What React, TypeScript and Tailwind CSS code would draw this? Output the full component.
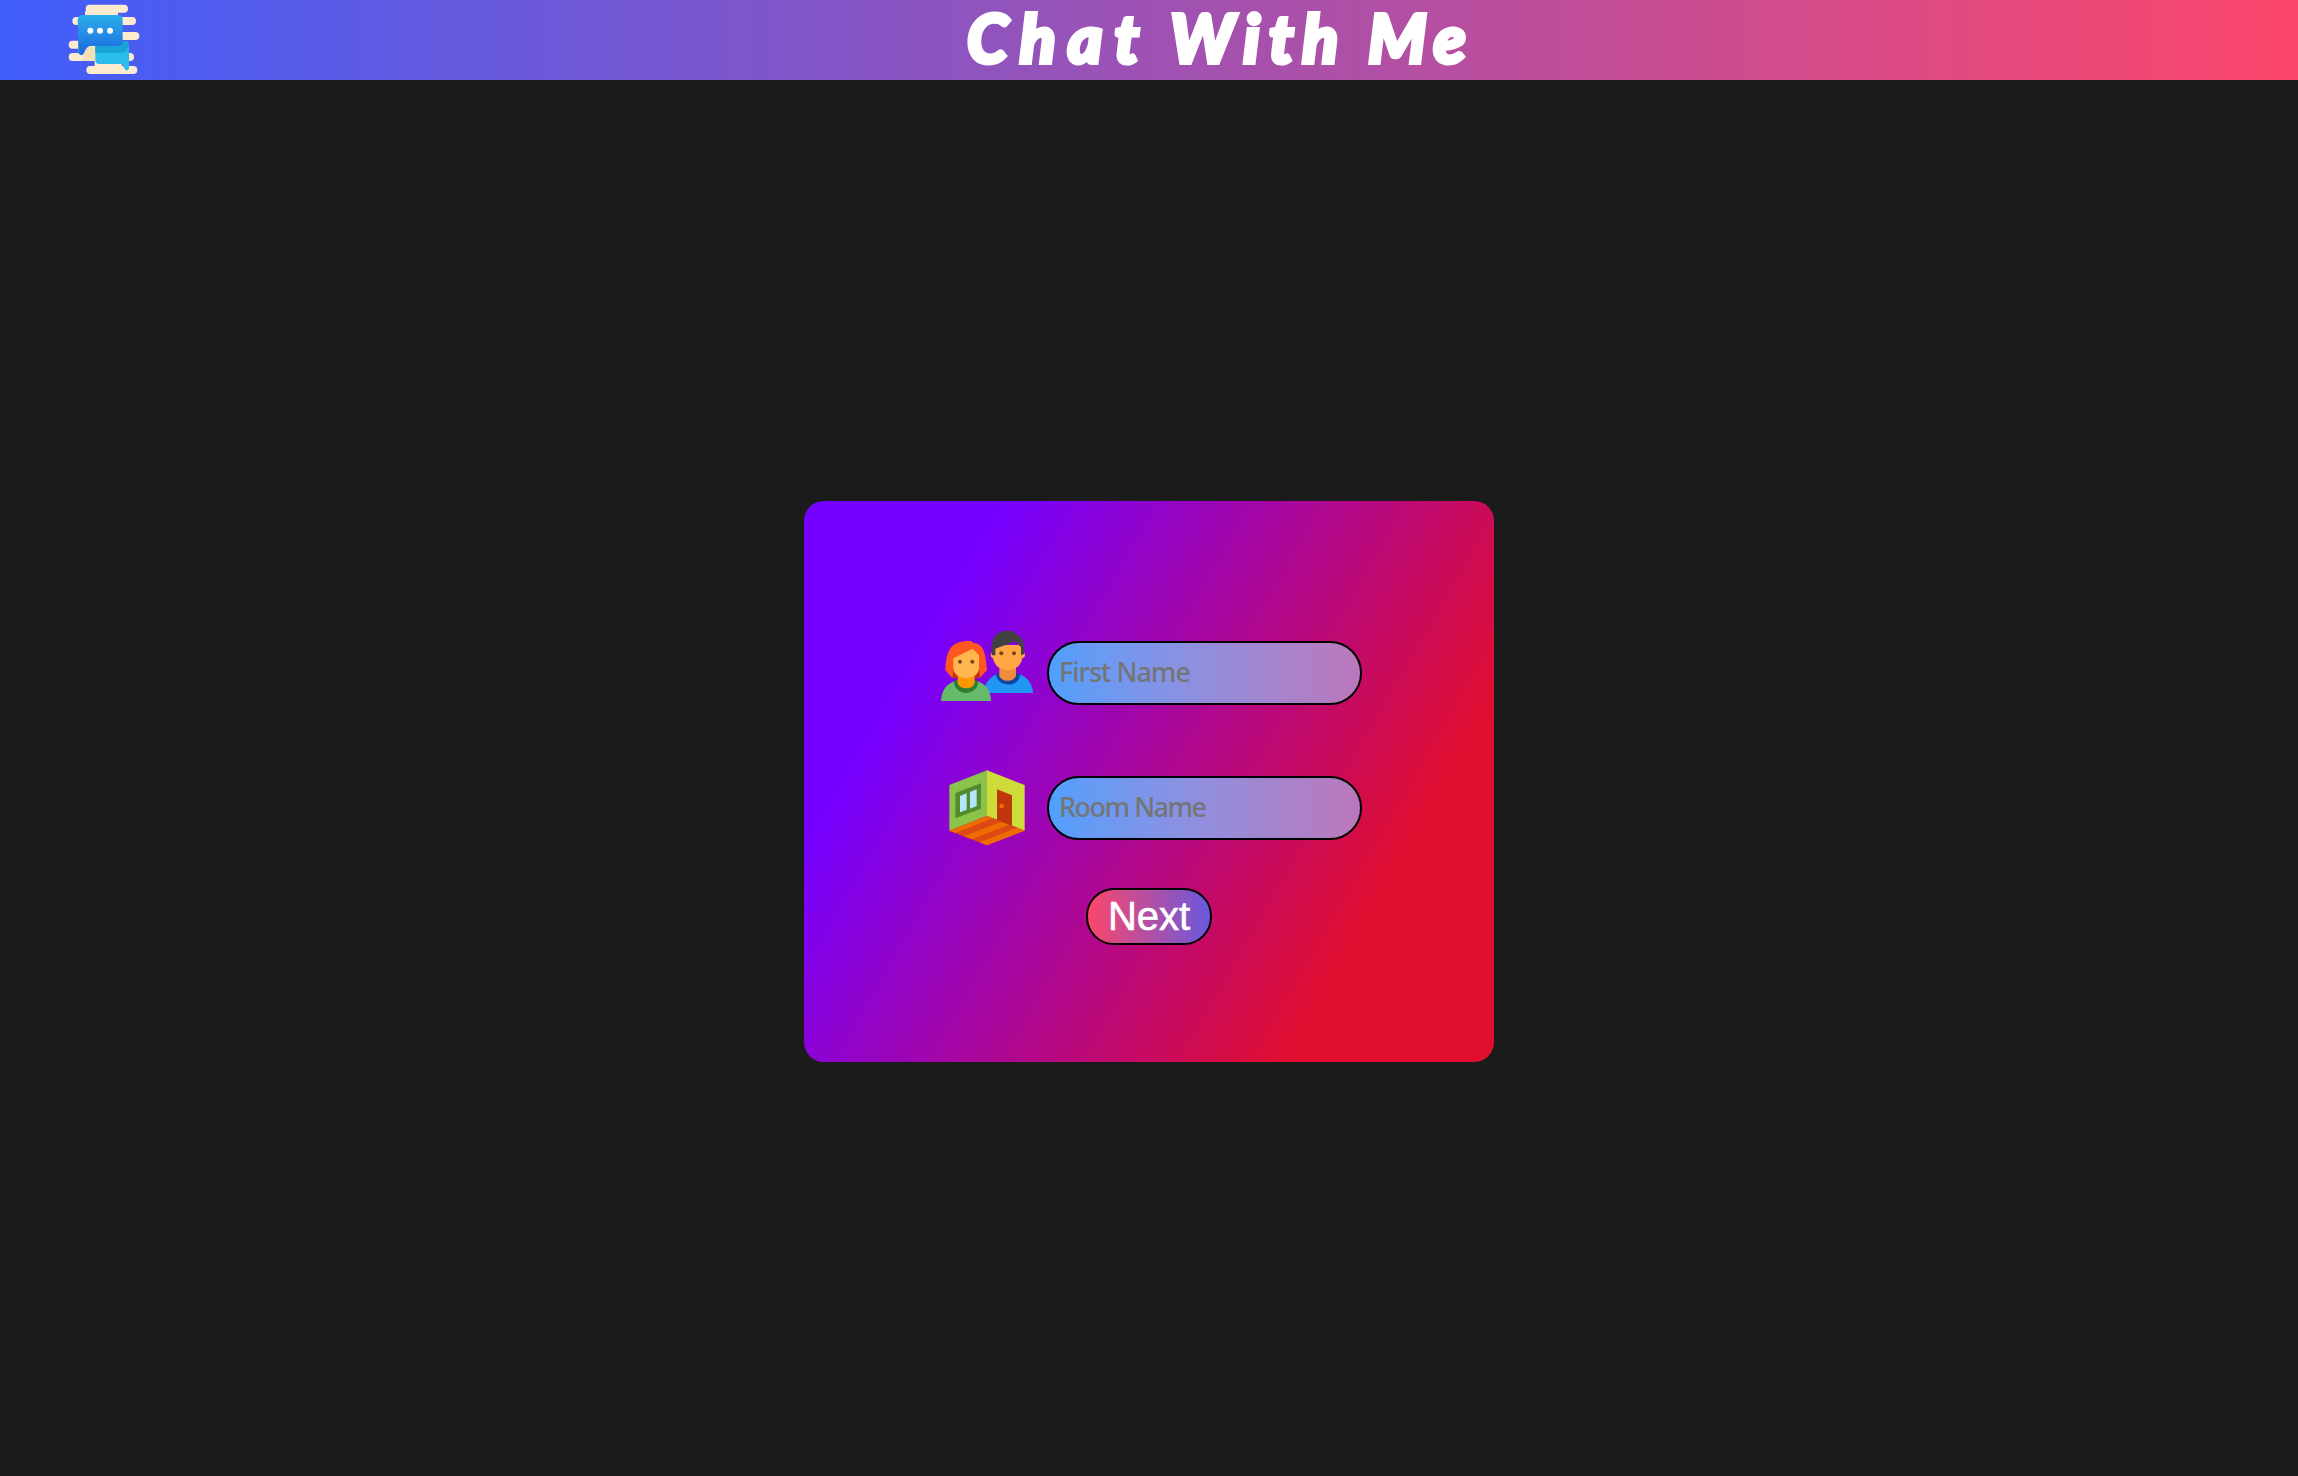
import React from 'react';

function ChatLogo() {
  return (
    <svg className="block h-20 w-[110px]" viewBox="0 0 330 240" fill="none">
      <defs>
        <linearGradient id="bubble" x1="0" y1="0" x2="0" y2="1">
          <stop offset="0" stopColor="#2baeea" />
          <stop offset="1" stopColor="#1b67e0" />
        </linearGradient>
        <linearGradient id="reply" x1="0" y1="0" x2="0" y2="1">
          <stop offset="0" stopColor="#1d9dd4" />
          <stop offset="0.4" stopColor="#28bfe9" />
          <stop offset="1" stopColor="#2fb8ea" />
        </linearGradient>
      </defs>
      <g stroke="#fdebcf" strokeWidth="24" strokeLinecap="round">
        <path d="M119 26H222M79 63H246M200 108H256M68 134H130M68 171H240M121 210H250" />
      </g>
      <path fill="#fdebcf" d="M105 34H204V50H105zM84 130H140V175H84zM134 180H215V205H134z" />
      <path fill="#f5dfb6" d="M106 140H137V182H98z" />
      <path fill="url(#reply)" d="M136 124H226Q237 124 237 136V204Q235 214 226 210L216 192H148Q136 192 136 180z" />
      <path fill="#1aa3d6" d="M136 124H235V140Q230 158 212 159H136z" />
      <path fill="url(#bubble)" d="M98 45H204Q218 45 218 59V124Q218 138 204 138H121Q110 140 106 151L100 163Q92 169 85 160L83 60Q84 45 98 45z" />
      <g fill="#fff">
        <circle cx="121" cy="92" r="9" />
        <circle cx="150" cy="92" r="9" />
        <circle cx="180" cy="92" r="9" />
      </g>
    </svg>
  );
}

function PeopleIcon() {
  return (
    <svg className="block h-[95px] w-[115px]" viewBox="0 0 345 285">
      <path fill="#2196f3" d="M162 219C164 186 182 168 208 160H260C290 168 308 190 309 219z" />
      <path fill="#0d47a1" d="M198 163C202 204 268 204 271 163L258 158H209z" />
      <path fill="#ef8b3b" d="M208 140H258V166C254 188 212 188 208 166z" />
      <circle cx="191" cy="105" r="9" fill="#ffa440" />
      <circle cx="276" cy="105" r="9" fill="#ffa440" />
      <path fill="#ffa744" d="M188 75H278V104C278 166 188 166 188 104z" />
      <path fill="#424242" d="M184 98C183 58 195 32 234 32L250 34L256 42C278 46 284 70 282 102L273 106V82L256 64L196 86V106H186z" />
      <g fill="#784719">
        <circle cx="214" cy="100" r="6" />
        <circle cx="252" cy="100" r="6" />
      </g>
      <path fill="#ff5722" d="M110 63L124 63L130 69C158 70 167 94 171 150L150 173H66L46 150C48 94 62 65 110 63z" />
      <path fill="#66bb6a" d="M33 243C34 208 54 188 78 182H138C164 188 182 208 183 243z" />
      <path fill="#2e7d32" d="M71 184C76 231 140 231 145 184L134 180H82z" />
      <path fill="#ff9800" d="M83 160H134V188C130 210 88 210 83 188z" />
      <path fill="#bf360c" d="M70 146H83V175L67 173zM147 146H134V175L150 173z" />
      <path fill="#ffb74d" d="M70 115L128 86L147 106V144C147 184 70 184 70 144z" />
      <g fill="#784719">
        <circle cx="90" cy="125" r="6" />
        <circle cx="127" cy="125" r="6" />
      </g>
    </svg>
  );
}

function RoomIcon() {
  return (
    <svg className="block h-[100px] w-[115px]" viewBox="0 0 345 300">
      <path fill="#8bc34a" d="M171 46L58 90V227L171 183z" />
      <path fill="#cddc39" d="M171 46L284 90V227L171 183z" />
      <path fill="#dd4814" d="M171 183L284 227L171 271L58 227z" />
      <path fill="#ef6c00" d="M58 227L171 183L188 190L75 234zM101 244L214 200L239 209L126 253zM148 262L261 218L284 227L171 271z" />
      <path fill="#558b2f" d="M76 114L153 85V161L76 190z" />
      <path fill="#b3e5fc" d="M90 123L110 115V164L90 172zM120 111L140 103V153L120 161z" />
      <path fill="#bf360c" d="M201 103L246 121V212L201 195z" />
      <circle cx="215" cy="153" r="7" fill="#ef6c00" />
    </svg>
  );
}

const inputClass =
  'block h-16 w-[315px] rounded-[32px] border-2 border-black bg-linear-to-r from-[#4f9ffe] to-[#bb77bb] pl-[10px] pr-2 pb-[3px] font-["Noto_Sans",sans-serif] text-[27px] font-medium text-white outline-none placeholder:text-[#757575] placeholder:opacity-100';

export default function App() {
  return (
    <div className="flex h-[1476px] w-full flex-col bg-[#1b1b1b]">
      <header className="flex h-20 shrink-0 bg-linear-to-r/srgb from-[#3f5efb] to-[#fc466b] pl-[50px]">
        <ChatLogo />
        <h1 className="ml-[807px] flex whitespace-nowrap font-[Lato] text-[66px] leading-[76px] font-black text-white italic [-webkit-text-stroke:4px_white]">
          <span className="w-[203px] tracking-[12px]">Chat</span>
          <span className="w-[198px] tracking-[9px]">With</span>
          <span className="tracking-[8px]">Me</span>
        </h1>
      </header>
      <main className="flex grow justify-center pt-[421px]">
        <form className="flex h-[561px] w-[690px] flex-col rounded-[20px] bg-[linear-gradient(120deg,#7600ff_20%,#e10e2e_80%)] pt-[119px]">
          <div className="flex h-[95px] items-start gap-[2px] pl-[126px]">
            <PeopleIcon />
            <div className="pt-[21px]">
              <input className={inputClass + ' tracking-[-1px]'} placeholder="First Name" />
            </div>
          </div>
          <div className="mt-10 flex h-[100px] items-start gap-[2px] pl-[126px]">
            <RoomIcon />
            <div className="pt-[21px]">
              <input className={inputClass + ' tracking-[-1.5px]'} placeholder="Room Name" />
            </div>
          </div>
          <button
            type="button"
            className="mt-[33px] h-[57px] w-[126px] self-center rounded-[28px] border-2 border-black bg-linear-to-r/srgb from-[#fc466b] to-[#6959dc] pb-[1px] font-['Liberation_Sans',sans-serif] text-[40px] leading-[50px] text-white [-webkit-text-stroke:0.6px_white]"
          >
            Next
          </button>
        </form>
      </main>
    </div>
  );
}
